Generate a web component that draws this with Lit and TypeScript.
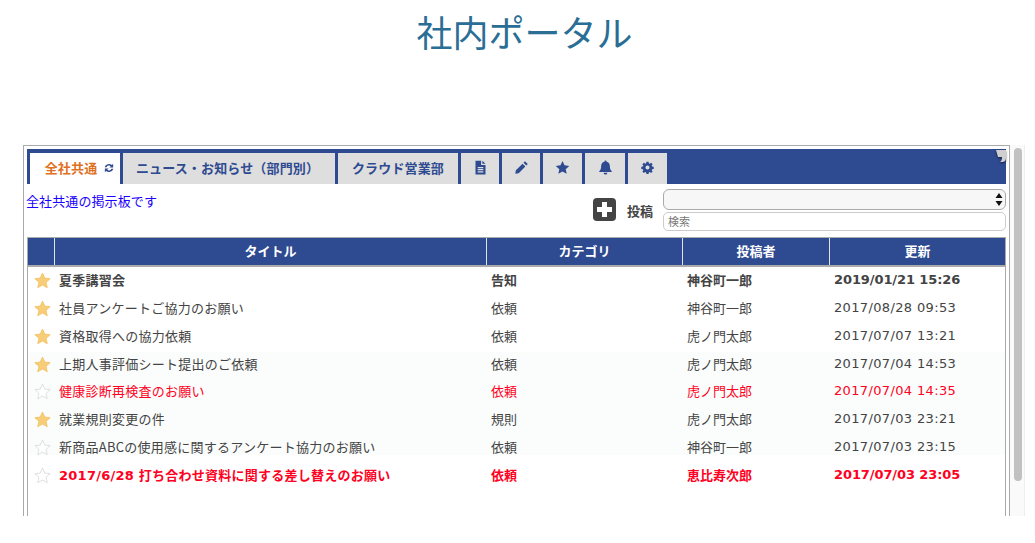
import { LitElement, html, css, svg } from "lit";
import { customElement } from "lit/decorators.js";

type Row = { title: string; cat: string; who: string; date: string; fav: boolean; cls: string };

const rows: Row[] = [
  { title: "夏季講習会", cat: "告知", who: "神谷町一郎", date: "2019/01/21 15:26", fav: true, cls: "bold" },
  { title: "社員アンケートご協力のお願い", cat: "依頼", who: "神谷町一郎", date: "2017/08/28 09:53", fav: true, cls: "" },
  { title: "資格取得への協力依頼", cat: "依頼", who: "虎ノ門太郎", date: "2017/07/07 13:21", fav: true, cls: "" },
  { title: "上期人事評価シート提出のご依頼", cat: "依頼", who: "虎ノ門太郎", date: "2017/07/04 14:53", fav: true, cls: "tint" },
  { title: "健康診断再検査のお願い", cat: "依頼", who: "虎ノ門太郎", date: "2017/07/04 14:35", fav: false, cls: "tint red" },
  { title: "就業規則変更の件", cat: "規則", who: "虎ノ門太郎", date: "2017/07/03 23:21", fav: true, cls: "tint" },
  { title: "新商品ABCの使用感に関するアンケート協力のお願い", cat: "依頼", who: "神谷町一郎", date: "2017/07/03 23:15", fav: false, cls: "tint-end" },
  { title: "2017/6/28 打ち合わせ資料に関する差し替えのお願い", cat: "依頼", who: "恵比寿次郎", date: "2017/07/03 23:05", fav: false, cls: "bold red" },
];

const star = (fav: boolean) => html`<svg class="star" viewBox="0 0 24 24">
  <path d="M12 1.5l3.2 7.1 7.6.8-5.7 5.2 1.6 7.6L12 18.3l-6.7 3.9 1.6-7.6L1.2 9.4l7.6-.8z"
    fill=${fav ? "#f8cd78" : "#fff"} stroke=${fav ? "#f3c469" : "#dcdcdc"} stroke-width="1.3" stroke-linejoin="round"></path>
</svg>`;

const icons = [
  svg`<path d="M4 1h9v7h7v15H4zM15 1l5 5h-5zM7.500 11v2h9v-2zM7.500 14.500v2h9v-2zM7.500 18v2h9v-2z" fill-rule="evenodd"/>`,
  svg`<path d="M17.500 2l4.500 4.500-2.300 2.300-4.500-4.500zM13.700 5.800l4.500 4.500L7.500 21 2 22l1-5.500z"/>`,
  svg`<path d="M12 1.500l3.200 7 7.600.9-5.700 5.200 1.600 7.500L12 18.300l-6.700 3.800 1.600-7.500L1.200 9.400l7.600-.9z"/>`,
  svg`<path d="M12 1a1.700 1.700 0 0 1 1.700 1.900C17.300 3.600 19 6.500 19 10c0 4.500 1 6 3 7.800V19H2v-1.200C4 16 5 14.500 5 10c0-3.500 1.700-6.400 5.300-7.100A1.700 1.700 0 0 1 12 1zM9 20.200h6a3 3 0 0 1-6 0z"/>`,
  svg`<path fill-rule="evenodd" d="M10 1h4l.6 3.100 1.700.7 2.600-1.800 2.800 2.800-1.800 2.600.7 1.700 3.100.6v4l-3.100.6-.7 1.700 1.800 2.600-2.800 2.800-2.600-1.800-1.700.7-.6 3.100h-4l-.6-3.100-1.700-.7-2.600 1.800-2.800-2.800 1.800-2.600-.7-1.700-3.100-.6v-4l3.100-.6.7-1.700L2.300 5.800 5.100 3l2.600 1.800 1.700-.7zM12 8.200a3.800 3.800 0 1 0 0 7.600 3.800 3.800 0 0 0 0-7.600z" transform="translate(1.800 1.800) scale(.85)"/>`,
];

@customElement("app-root")
export class AppRoot extends LitElement {
  static styles = css`
    :host {
      display: block;
      height: 543px;
      background: #fff;
      overflow: hidden;
      font-family: "Liberation Sans", "Noto Sans CJK JP", sans-serif;
      font-size: 13px;
      color: #444;
    }
    h1 {
      margin: 0;
      height: 145px;
      padding-top: 7px;
      box-sizing: border-box;
      width: 1049px;
      text-align: center;
      font-family: "Noto Sans CJK JP", sans-serif;
      font-size: 36px;
      font-weight: 400;
      line-height: 48px;
      color: #2a6e96;
    }
    .shell {
      display: flex;
      height: 371px;
      margin-left: 23px;
      overflow: hidden;
    }
    .frame {
      width: 987px;
      box-sizing: border-box;
      border: 1px solid #aaa;
      border-bottom: 0;
      padding: 3px 3px 0;
    }
    .scroll {
      width: 15px;
      background: #fafafa;
      border-right: 1px solid #eee;
      box-sizing: border-box;
      padding: 3px 3px 0 4px;
    }
    .thumb {
      height: 333px;
      width: 8px;
      background: #c1c1c1;
      border-radius: 4px;
    }
    .panel {
      height: 100%;
      position: relative;
    }
    .edges {
      position: absolute;
      left: 0;
      right: 0;
      top: 88px;
      bottom: 0;
      border-left: 1px solid #aaa;
      border-right: 1px solid #aaa;
      pointer-events: none;
    }
    .bar {
      display: flex;
      gap: 3px;
      height: 35px;
      box-sizing: border-box;
      padding: 4px 0 0 3px;
      background: #2e4a90;
      position: relative;
    }
    .tab {
      display: flex;
      align-items: center;
      justify-content: center;
      height: 31px;
      padding-bottom: 2px;
      background: #dedede;
      color: #2e4a90;
      font-family: "Noto Sans CJK JP", sans-serif;
      font-weight: 700;
      font-size: 13px;
      letter-spacing: 0.15px;
      box-sizing: border-box;
    }
    .tab.wide {
      padding-right: 3px;
    }
    .tab.active {
      background: #fff;
      color: #e0701e;
      gap: 7px;
      padding-left: 9px;
    }
    .tab svg {
      width: 15px;
      height: 15px;
      fill: #2e4a90;
    }
    .tab.active svg {
      width: 10px;
      height: 10px;
    }
    .curl {
      position: absolute;
      right: 0;
      top: 1px;
      width: 10px;
      height: 13px;
      fill: #cfcfcf;
      filter: drop-shadow(0 1px 1px rgba(0, 0, 0, 0.6));
    }
    .tools {
      display: flex;
      height: 53px;
    }
    .note {
      flex: 1;
      color: #1a00ff;
      font-family: "Noto Sans CJK JP", sans-serif;
      letter-spacing: 0.1px;
      line-height: 19px;
      padding-top: 7px;
      margin-left: -1px;
    }
    .post {
      display: flex;
      align-items: center;
      gap: 11px;
      margin-right: 10px;
      padding-top: 7px;
      height: 37px;
      font-family: "Noto Sans CJK JP", sans-serif;
      font-weight: 700;
      font-size: 13px;
      color: #444;
    }
    .post span {
      padding-top: 2px;
    }
    .post svg {
      width: 23px;
      height: 23px;
    }
    .fields {
      width: 343px;
      padding-top: 5px;
      display: flex;
      flex-direction: column;
      gap: 2px;
    }
    .select {
      height: 21px;
      box-sizing: border-box;
      border: 1px solid #aaa;
      border-radius: 6px;
      background: #f7f7f7;
      display: flex;
      justify-content: flex-end;
      align-items: center;
      padding-right: 2px;
    }
    .select svg {
      width: 8px;
      height: 13px;
    }
    .search {
      height: 19px;
      box-sizing: border-box;
      border: 1px solid #ccc;
      border-radius: 5px;
      padding-left: 4px;
      color: #777;
      font-family: "Noto Sans CJK JP", sans-serif;
      font-size: 11px;
      line-height: 17px;
    }
    .grid {
      display: grid;
      grid-template-columns: 27px 432px 196px 147px 176px;
      width: 978px;
      align-items: center;
      font-family: "Noto Sans CJK JP", sans-serif;
    }
    .head {
      height: 30px;
      box-sizing: border-box;
      border-top: 1px solid #aaa;
      border-bottom: 2px solid #aaa;
      background: #2e4a90;
      color: #fff;
      font-weight: 700;
      margin-bottom: 1px;
      align-items: stretch;
    }
    .head div {
      display: flex;
      align-items: center;
      justify-content: center;
      border-left: 1px solid #dfe3ee;
      padding-bottom: 2px;
    }
    .head div:first-child {
      border-left: 0;
    }
    .row {
      height: 27.860px;
      line-height: 24px;
      white-space: nowrap;
    }
    .row.tint {
      background: #fbfdfc;
    }
    .row.tint-end {
      background: linear-gradient(#fbfdfc 0 72%, #fff 72%);
    }
    .row.bold {
      font-weight: 700;
    }
    .row.red {
      color: #ff0022;
    }
    .ico {
      display: flex;
      justify-content: flex-end;
      padding-right: 3px;
    }
    .star {
      width: 17px;
      height: 17px;
      display: block;
      margin-bottom: 3px;
    }
    .t,
    .c,
    .d {
      padding-left: 5px;
      margin-bottom: 4px;
    }
    .t {
      letter-spacing: 0.25px;
    }
    .row.bold .t {
      font-family: "DejaVu Sans", "Noto Sans CJK JP", sans-serif;
      margin-bottom: 2px;
    }
    .d {
      font-family: "DejaVu Sans", sans-serif;
      letter-spacing: 0.35px;
      font-size: 13px;
    }
    .row.bold .d {
      letter-spacing: -0.1px;
    }
  `;

  render() {
    return html`
      <h1>社内ポータル</h1>
      <div class="shell">
        <div class="frame">
          <div class="panel">
            <div class="bar">
              <div class="tab active" style="width:90px">全社共通
                <svg viewBox="0 0 24 24"><path d="M22 2v9h-9l3.300-3.300A6.500 6.500 0 0 0 6 10H1.500A11 11 0 0 1 19 4.900zM2 22v-9h9l-3.300 3.300A6.500 6.500 0 0 0 18 14h4.500A11 11 0 0 1 5 19.100z"/></svg>
              </div>
              <div class="tab wide" style="width:212px">ニュース・お知らせ（部門別）</div>
              <div class="tab" style="width:120px">クラウド営業部</div>
              ${icons.map((p, i) => html`<div class="tab" style="width:${[38, 38, 39, 40, 39][i]}px"><svg viewBox="0 0 24 24">${p}</svg></div>`)}
              <svg class="curl" viewBox="0 0 10 13"><path d="M0 0h10v8q0 4-4 4H4q2-1 2-5H2z"/></svg>
            </div>
            <div class="tools">
              <div class="note">全社共通の掲示板です</div>
              <div class="post">
                <svg viewBox="0 0 23 23"><rect width="23" height="23" rx="4" fill="#444"/><path d="M9 4h5v5h5v5h-5v5H9v-5H4V9h5z" fill="#fff"/></svg>
                <span>投稿</span>
              </div>
              <div class="fields">
                <div class="select"><svg viewBox="0 0 8 13"><path d="M4 0l3.500 5h-7zM4 13L.5 8h7z" fill="#111"/></svg></div>
                <div class="search">検索</div>
              </div>
            </div>
            <div class="grid head">
              <div></div><div>タイトル</div><div>カテゴリ</div><div>投稿者</div><div>更新</div>
            </div>
            ${rows.map(
              (r) => html`<div class="grid row ${r.cls}">
                <div class="ico">${star(r.fav)}</div>
                <div class="t">${r.title}</div>
                <div class="c">${r.cat}</div>
                <div class="c">${r.who}</div>
                <div class="d">${r.date}</div>
              </div>`
            )}
            <div class="edges"></div>
          </div>
        </div>
        <div class="scroll"><div class="thumb"></div></div>
      </div>
    `;
  }
}
